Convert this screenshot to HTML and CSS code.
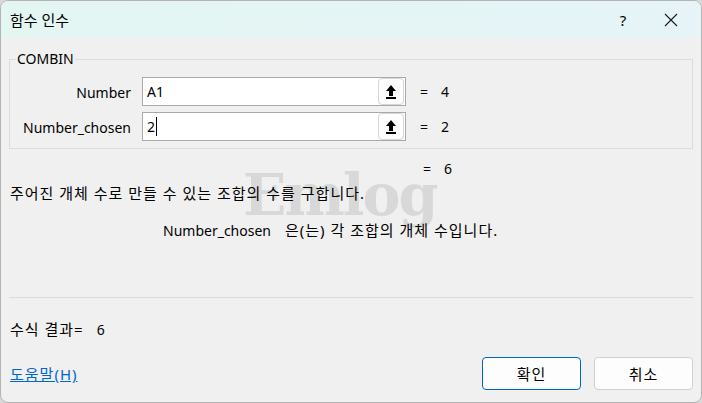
FILE: index.html
```html
<!DOCTYPE html>
<html lang="ko">
<head>
    <meta charset="UTF-8">
    <title>함수 인수</title>
    <link rel="stylesheet" href="styles.css">
</head>
<body>
    <div class="window">
        <header class="titlebar">
            <span class="title">함수 인수</span>
            <span class="title-btn help">?</span>
            <span class="title-btn close">
                <svg width="14" height="14" viewBox="0 0 14 14"><path d="M1 1 L13 13 M13 1 L1 13" stroke="#1a1a1a" stroke-width="1.1" fill="none"/></svg>
            </span>
        </header>

        <main class="content">
            <fieldset class="group">
                <legend>COMBIN</legend>
                <div class="arg-row">
                    <label class="arg-label">Number</label>
                    <div class="arg-input">
                        <span class="arg-text">A1</span>
                        <span class="ref-btn">
                            <svg width="12" height="16" viewBox="0 0 12 16"><path d="M6 1 L11 7 L8 7 L8 12 L4 12 L4 7 L1 7 Z" fill="#000"/><rect x="1" y="13" width="10" height="2" fill="#000"/></svg>
                        </span>
                    </div>
                    <span class="arg-eq">=</span>
                    <span class="arg-val">4</span>
                </div>
                <div class="arg-row">
                    <label class="arg-label">Number_chosen</label>
                    <div class="arg-input">
                        <span class="arg-text">2<span class="caret"></span></span>
                        <span class="ref-btn">
                            <svg width="12" height="16" viewBox="0 0 12 16"><path d="M6 1 L11 7 L8 7 L8 12 L4 12 L4 7 L1 7 Z" fill="#000"/><rect x="1" y="13" width="10" height="2" fill="#000"/></svg>
                        </span>
                    </div>
                    <span class="arg-eq">=</span>
                    <span class="arg-val">2</span>
                </div>
            </fieldset>

            <div class="total-row">
                <span class="arg-eq">=</span>
                <span class="arg-val">6</span>
            </div>

            <div class="desc-block">
                <div class="watermark">Emlog</div>
                <p class="desc ko">주어진 개체 수로 만들 수 있는 조합의 수를 구합니다.</p>
                <p class="arg-desc"><span class="arg-name">Number_chosen</span><span class="ko">은(는) 각 조합의 개체 수입니다.</span></p>
            </div>

            <hr class="sep">

            <p class="result"><span class="ko">수식 결과=</span><span class="result-val">6</span></p>

            <footer class="footer">
                <a class="help-link ko" href="#">도움말(H)</a>
                <button class="btn primary ko">확인</button>
                <button class="btn ko">취소</button>
            </footer>
        </main>
    </div>
</body>
</html>
```

FILE: styles.css
```css
html, body {
    margin: 0;
    padding: 0;
}
body {
    width: 702px;
    height: 403px;
    background: #d9d9d9;
    font-family: "Noto Sans", "Noto Sans CJK KR", sans-serif;
    font-size: 14px;
    color: #000;
    overflow: hidden;
}
.ko {
    font-size: 15px;
    letter-spacing: 1px;
}
.window {
    width: 700px;
    height: 401px;
    background: #f0f0f0;
    border: 1px solid #b4b4b4;
    border-radius: 8px;
    overflow: hidden;
    display: flex;
    flex-direction: column;
}
.titlebar {
    height: 37px;
    flex-shrink: 0;
    display: flex;
    align-items: center;
    background: linear-gradient(90deg, #e3f6f2, #e6f4f8);
    padding-left: 9px;
}
.title {
    flex: 1;
    font-size: 15px;
}
.title-btn {
    width: 46px;
    display: flex;
    justify-content: center;
    align-items: center;
}
.help {
    font-size: 15px;
    margin-right: 2px;
}
.close {
    margin-right: 7px;
}
.content {
    flex: 1;
    display: flex;
    flex-direction: column;
    padding: 11px 8px 0 8px;
}
.group {
    margin: 0;
    padding: 2px 0 7px 0;
    border: 1px solid #dcdcdc;
}
.group legend {
    font-size: 14px;
    padding: 0 1px;
    margin-left: 6px;
    line-height: 20px;
}
.arg-row {
    display: flex;
    align-items: center;
    height: 29px;
    margin-top: 6px;
}
.arg-label {
    width: 121px;
    text-align: right;
    margin-right: 11px;
    padding-top: 1px;
}
.arg-input {
    width: 262px;
    height: 27px;
    border: 1px solid #a9a9a9;
    background: #fff;
    display: flex;
    align-items: center;
    justify-content: space-between;
}
.arg-text {
    padding-left: 4px;
    display: flex;
    align-items: center;
}
.caret {
    display: inline-block;
    width: 1px;
    height: 19px;
    background: #000;
    margin-left: 1px;
}
.ref-btn {
    width: 24px;
    height: 25px;
    margin-right: 1px;
    border: 1px solid #d6d6d6;
    border-radius: 4px;
    background: #fdfdfd;
    display: flex;
    align-items: center;
    justify-content: center;
}
.arg-eq {
    margin-left: 14px;
    width: 21px;
}
.total-row {
    display: flex;
    height: 20px;
    margin-top: 10px;
    padding-left: 400px;
}
.desc-block {
    position: relative;
}
.watermark {
    position: absolute;
    left: 234px;
    top: -13px;
    font-family: "DejaVu Serif", serif;
    font-weight: bold;
    font-size: 57px;
    letter-spacing: -2px;
    color: #d8d8d8;
    line-height: 1;
}
.desc {
    position: relative;
    margin: 4px 0 0 1px;
    line-height: 20px;
}
.arg-desc {
    position: relative;
    margin: 17px 0 0 154px;
    line-height: 20px;
}
.arg-name {
    margin-right: 14px;
}
.sep {
    margin: 56px 0 0 0;
    border: 0;
    border-top: 1px solid #dadada;
    width: 684px;
}
.result {
    margin: 21px 0 0 1px;
    line-height: 20px;
}
.result-val {
    margin-left: 13px;
}
.footer {
    display: flex;
    align-items: center;
    margin-top: 17px;
}
.help-link {
    flex: 1;
    color: #0066cc;
    padding-left: 1px;
}
.btn {
    width: 99px;
    height: 33px;
    margin-left: 13px;
    font-family: inherit;
    background: #fdfdfd;
    border: 1px solid #d0d0d0;
    border-radius: 4px;
}
.primary {
    margin-left: 0;
    border-color: #0067c0;
}
```
